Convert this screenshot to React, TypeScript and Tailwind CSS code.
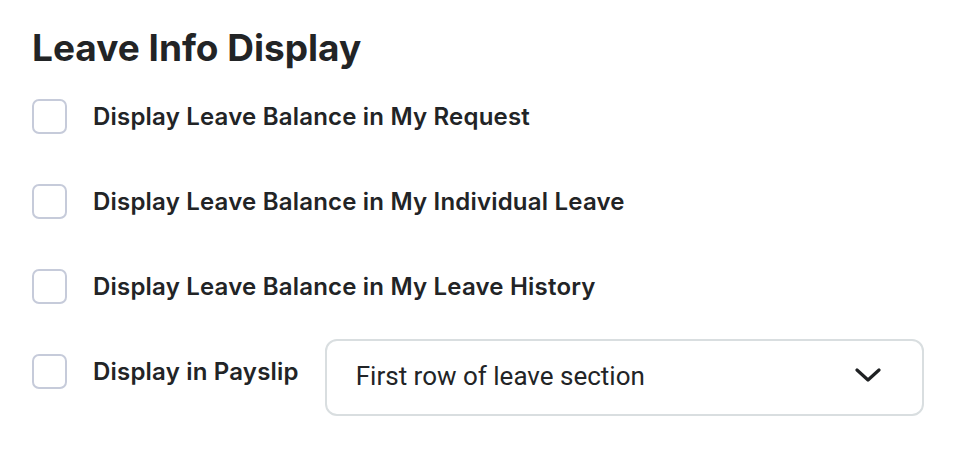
import React from "react";

const rows = [
  "Display Leave Balance in My Request",
  "Display Leave Balance in My Individual Leave",
  "Display Leave Balance in My Leave History",
];

function Box() {
  return <div className="w-[35px] h-[35px] shrink-0 rounded-[7px] border-2 border-[#c6cbda] bg-white" />;
}

export default function App() {
  return (
    <div className="w-[966px] h-[452px] bg-white text-[#222426] pl-[32px] pt-[24px]" style={{ fontFamily: "Inter, 'Noto Sans', sans-serif" }}>
      <h1 className="text-[37px] font-bold leading-[48px]">Leave Info Display</h1>
      <div className="mt-[2px] flex flex-col">
        {rows.map((r) => (
          <div key={r} className="flex items-center h-[85px] gap-[26px]">
            <Box />
            <span className="text-[24px] font-semibold leading-none tracking-[0.2px]">{r}</span>
          </div>
        ))}
        <div className="flex items-center h-[85px]">
          <div className="flex items-center gap-[26px]">
            <Box />
            <span className="text-[24px] font-semibold leading-none tracking-[0.2px]">Display in Payslip</span>
          </div>
          <div className="ml-[26px] mt-[12px] w-[599px] h-[77px] rounded-[12px] border-2 border-[#d9dee0] flex items-center justify-between pl-[29px] pr-[41px]">
            <span className="text-[26px] leading-none text-[#222426] -mt-[3px]" style={{ fontFamily: "Roboto, sans-serif" }}>First row of leave section</span>
            <svg width="26" height="14" viewBox="0 0 26 14" fill="none" className="-mt-[6px]">
              <path d="M2 2 L13 12 L24 2" stroke="#1f2123" strokeWidth="3.2" strokeLinecap="round" strokeLinejoin="round" />
            </svg>
          </div>
        </div>
      </div>
    </div>
  );
}
